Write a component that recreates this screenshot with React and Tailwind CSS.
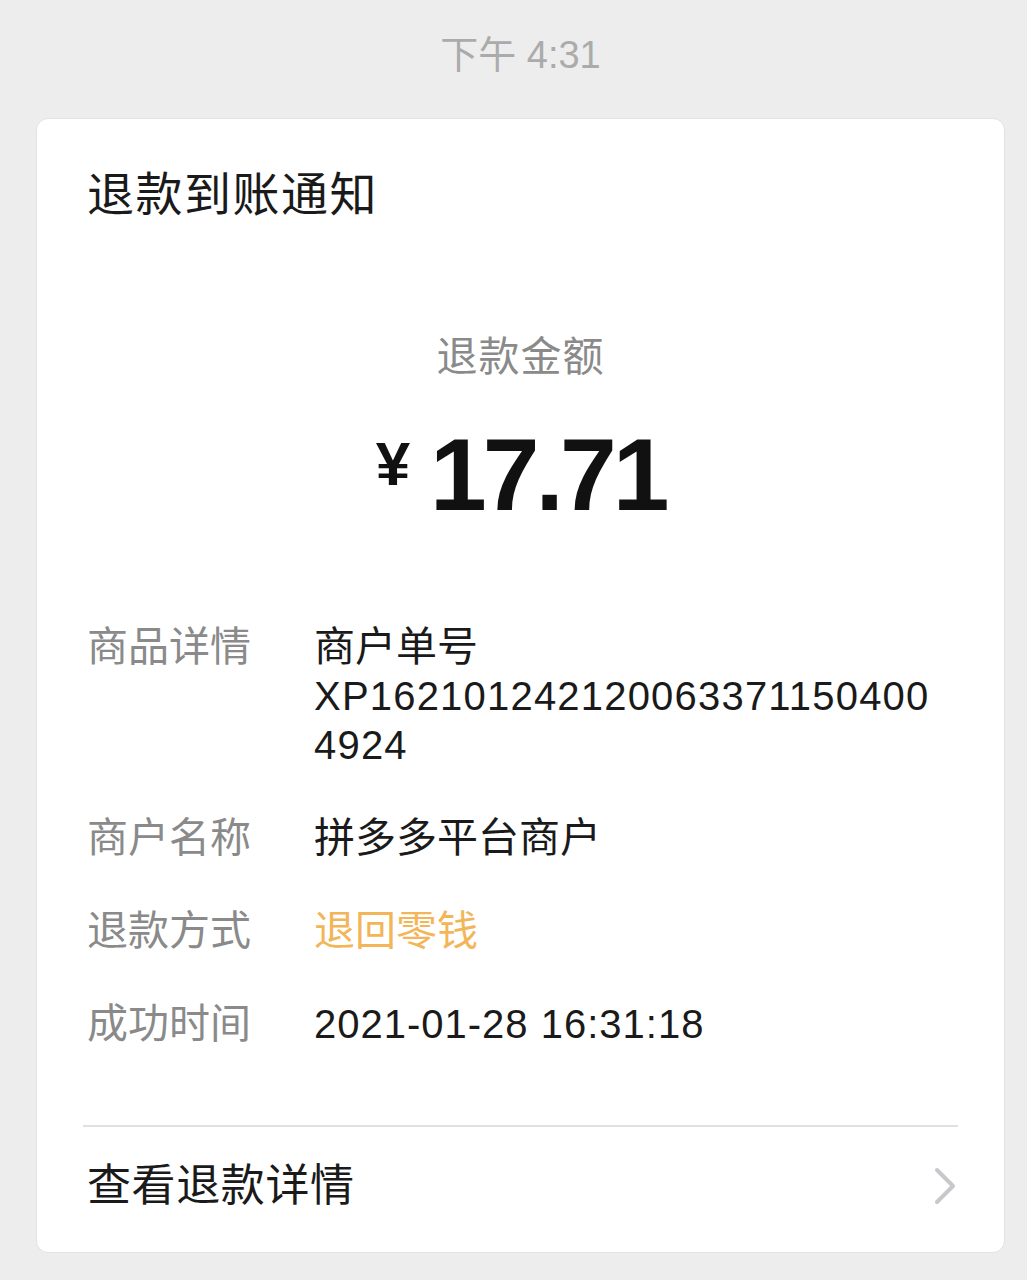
import React from "react";

const font = { fontFamily: '"Liberation Sans", "Noto Sans CJK SC", sans-serif' };

// Detail rows of the refund notice
const rows = [
  { label: "商品详情", lines: ["商户单号", "XP162101242120063371150400", "4924"] },
  { label: "商户名称", lines: ["拼多多平台商户"] },
  { label: "退款方式", lines: ["退回零钱"], accent: true },
  { label: "成功时间", lines: ["2021-01-28 16:31:18"], date: true },
];

const Chevron = () => (
  <svg width="26" height="38" viewBox="0 0 26 38" fill="none">
    <path d="M5 3 L21 19 L5 35" stroke="#c7c7cc" strokeWidth="4" strokeLinecap="round" strokeLinejoin="round" />
  </svg>
);

export default function App() {
  return (
    <div className="min-h-[1280px] w-[1027px] bg-[#ededed] pb-[29px]" style={font}>
      {/* Message time */}
      <div className="pl-[36px] w-[1005px] pt-[30px] pb-[38px] text-center text-[38px] leading-[50px] text-[#ababab]">
        下午 4:31
      </div>

      {/* Notice card */}
      <div className="ml-[36px] w-[969px] bg-white rounded-[12px] border border-[#e2e2e2] px-[46px] pt-[46px] pb-[36px]">
        <div className="pl-[4px] text-[47px] leading-[60px] tracking-[1.5px] text-[#1a1a1a]">退款到账通知</div>

        <div className="mt-[104px] text-center text-[41px] leading-[56px] text-[#8a8a8a] tracking-[1px]">
          退款金额
        </div>

        <div className="mt-[35px] flex items-center justify-center h-[110px] text-[#111] font-bold">
          <span className="text-[62px] leading-none mr-[20px] mt-[-22px]">¥</span>
          <span className="text-[102px] leading-none tracking-[-4px]">17.71</span>
        </div>

        <div className="mt-[93px] pl-[4px] flex flex-col gap-[44px]">
          {rows.map((row) => (
            <div key={row.label} className="flex text-[41px] leading-[49px]">
              <div className="w-[227px] shrink-0 text-[#8a8a8a]">{row.label}</div>
              <div className={row.accent ? "text-[#f2b658]" : "text-[#1a1a1a]"}>
                {row.lines.map((line, i) => (
                  <div
                    key={i}
                    className={
                      row.date ? "text-[40px] tracking-[1px]" : i > 0 ? "text-[40px] tracking-[1.2px]" : ""
                    }
                  >
                    {line}
                  </div>
                ))}
              </div>
            </div>
          ))}
        </div>

        <div className="mt-[76px] h-[2px] bg-[#e0e0e0]" />

        <div className="mt-[29px] pl-[4px] flex items-center justify-between">
          <span className="text-[44px] leading-[60px] tracking-[0.6px] text-[#1a1a1a]">查看退款详情</span>
          <Chevron />
        </div>
      </div>
    </div>
  );
}
